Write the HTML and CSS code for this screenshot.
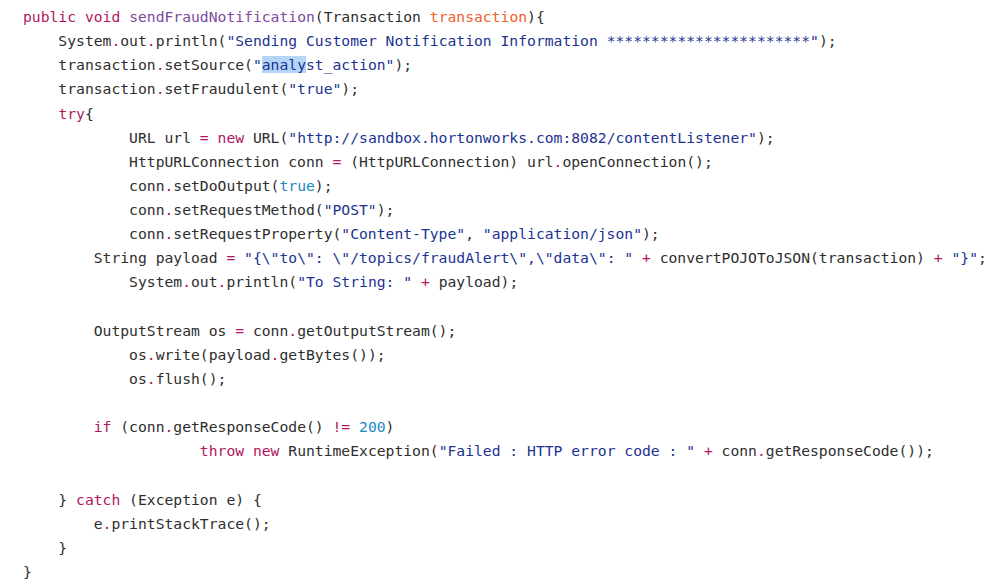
FILE: index.html
```html
<!DOCTYPE html>
<html>
<head>
<meta charset="utf-8">
<link rel="stylesheet" href="styles.css">
</head>
<body>
<pre class="code"><span class="k">public</span> <span class="k">void</span> <span class="m">sendFraudNotification</span>(Transaction <span class="p">transaction</span>){
    System<span class="k">.</span>out<span class="k">.</span>println(<span class="s">"Sending Customer Notification Information ***********************"</span>);
    transaction<span class="k">.</span>setSource(<span class="s">"<span class="sel">analy</span>st_action"</span>);
    transaction<span class="k">.</span>setFraudulent(<span class="s">"true"</span>);
    <span class="k">try</span>{
            URL url <span class="k">=</span> <span class="k">new</span> URL(<span class="s">"http://sandbox.hortonworks.com:8082/contentListener"</span>);
            HttpURLConnection conn <span class="k">=</span> (HttpURLConnection) url<span class="k">.</span>openConnection();
            conn<span class="k">.</span>setDoOutput(<span class="c">true</span>);
            conn<span class="k">.</span>setRequestMethod(<span class="s">"POST"</span>);
            conn<span class="k">.</span>setRequestProperty(<span class="s">"Content-Type"</span>, <span class="s">"application/json"</span>);
        String payload <span class="k">=</span> <span class="s">"{\"to\": \"/topics/fraudAlert\",\"data\": "</span> <span class="k">+</span> convertPOJOToJSON(transaction) <span class="k">+</span> <span class="s">"}"</span>;
            System<span class="k">.</span>out<span class="k">.</span>println(<span class="s">"To String: "</span> <span class="k">+</span> payload);

        OutputStream os <span class="k">=</span> conn<span class="k">.</span>getOutputStream();
            os<span class="k">.</span>write(payload<span class="k">.</span>getBytes());
            os<span class="k">.</span>flush();

        <span class="k">if</span> (conn<span class="k">.</span>getResponseCode() <span class="k">!=</span> <span class="c">200</span>)
                    <span class="k">throw</span> <span class="k">new</span> RuntimeException(<span class="s">"Failed : HTTP error code : "</span> <span class="k">+</span> conn<span class="k">.</span>getResponseCode());

    } <span class="k">catch</span> (Exception e) {
        e<span class="k">.</span>printStackTrace();
    }
}</pre>
</body>
</html>
```
FILE: styles.css
```css
html, body {
  margin: 0;
  padding: 0;
  background: #ffffff;
}
.code {
  margin: 0;
  padding: 5px 0 0 23px;
  font-family: "DejaVu Sans Mono", "Liberation Mono", monospace;
  font-size: 14.7px;
  line-height: 24.13px;
  color: #2e2e2e;
  white-space: pre;
}
.k { color: #b0175f; }
.m { color: #7b4a9e; }
.p { color: #f2602b; }
.s { color: #1b3392; }
.c { color: #1b88c2; }
.sel { background: #b5d5f7; }
```
